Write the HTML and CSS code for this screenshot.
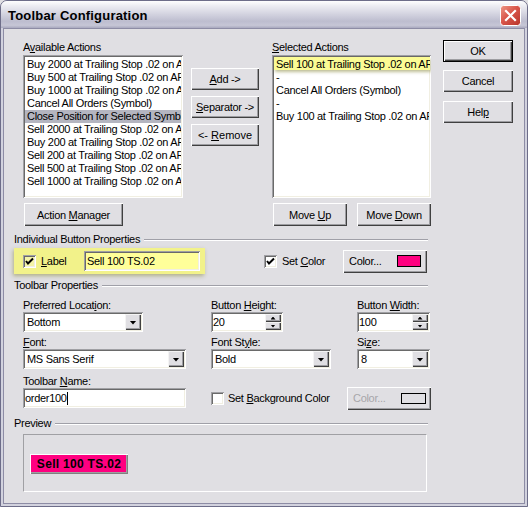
FILE: index.html
```html
<!DOCTYPE html>
<html>
<head>
<meta charset="utf-8">
<title>Toolbar Configuration</title>
<link rel="stylesheet" href="styles.css">
</head>
<body>
<div class="window">
  <div class="titlebar">
    <span class="title">Toolbar Configuration</span>
    <div class="close">
      <svg width="21" height="21" viewBox="0 0 21 21">
        <defs>
          <linearGradient id="cg" x1="0" y1="0" x2="1" y2="1">
            <stop offset="0" stop-color="#ee9a88"/>
            <stop offset="0.45" stop-color="#d9564a"/>
            <stop offset="1" stop-color="#b8332a"/>
          </linearGradient>
        </defs>
        <rect x="0.5" y="0.5" width="20" height="20" rx="3" fill="url(#cg)" stroke="#ffffff"/>
        <path d="M6 6 L15 15 M15 6 L6 15" stroke="#ffffff" stroke-width="2.2" stroke-linecap="square"/>
      </svg>
    </div>
  </div>
  <div class="frame">
    <div class="client">
      <div class="main">
        <div class="top">
          <div class="col-left">
            <div class="lbl">A<u>v</u>ailable Actions</div>
            <div class="listbox">
              <div class="item">Buy 2000 at Trailing Stop .02 on ARCA</div>
              <div class="item">Buy 500 at Trailing Stop .02 on ARCA</div>
              <div class="item">Buy 1000 at Trailing Stop .02 on ARCA</div>
              <div class="item">Cancel All Orders (Symbol)</div>
              <div class="item sel">Close Position for Selected Symbol</div>
              <div class="item">Sell 2000 at Trailing Stop .02 on ARCA</div>
              <div class="item">Buy 200 at Trailing Stop .02 on ARCA</div>
              <div class="item">Sell 200 at Trailing Stop .02 on ARCA</div>
              <div class="item">Sell 500 at Trailing Stop .02 on ARCA</div>
              <div class="item">Sell 1000 at Trailing Stop .02 on ARCA</div>
            </div>
            <div class="btn btn-am"><span>Action <u>M</u>anager</span></div>
          </div>
          <div class="col-mid">
            <div class="btn"><span><u>A</u>dd -&gt;</span></div>
            <div class="btn"><span><u>S</u>eparator -&gt;</span></div>
            <div class="btn btn-rm"><span>&lt;-&nbsp;<u>R</u>emove</span></div>
          </div>
          <div class="col-right">
            <div class="lbl"><u>S</u>elected Actions</div>
            <div class="listbox">
              <div class="item hl">Sell 100 at Trailing Stop .02 on ARCA</div>
              <div class="item">-</div>
              <div class="item">Cancel All Orders (Symbol)</div>
              <div class="item">-</div>
              <div class="item">Buy 100 at Trailing Stop .02 on ARCA</div>
            </div>
            <div class="btnrow">
              <div class="btn"><span>Move <u>U</u>p</span></div>
              <div class="btn"><span>Move <u>D</u>own</span></div>
            </div>
          </div>
        </div>

        <div class="ghd g1"><span>Individual Button Properties</span><i class="rule"></i></div>
        <div class="ind-row">
          <div class="hl-box">
            <span class="chk yel"><svg width="13" height="13" viewBox="0 0 13 13"><path d="M3 6 L5 8.5 L10 3.5" fill="none" stroke="#000" stroke-width="2"/></svg></span>
            <span class="chk-text"><u>L</u>abel</span>
            <div class="field yel">Sell 100 TS.02</div>
          </div>
          <span class="chk setcolor"><svg width="13" height="13" viewBox="0 0 13 13"><path d="M3 6 L5 8.5 L10 3.5" fill="none" stroke="#000" stroke-width="2"/></svg></span>
          <span class="chk-text">Set <u>C</u>olor</span>
          <div class="btn color-btn"><span>Color...</span><span class="swatch pink"></span></div>
        </div>

        <div class="ghd g2"><span>Toolbar Properties</span><i class="rule"></i></div>
        <div class="tb-grid">
          <div class="fld">
            <div class="f-lbl">Preferred Locat<u>i</u>on:</div>
            <div class="combo w120"><span class="val">Bottom</span><span class="dd"></span></div>
          </div>
          <div class="fld">
            <div class="f-lbl">Button <u>H</u>eight:</div>
            <div class="spin w72"><span class="val">20</span><span class="spinbtns"><span class="sb up"></span><span class="sb down"></span></span></div>
          </div>
          <div class="fld">
            <div class="f-lbl">Button <u>W</u>idth:</div>
            <div class="spin w73"><span class="val">100</span><span class="spinbtns"><span class="sb up"></span><span class="sb down"></span></span></div>
          </div>

          <div class="fld">
            <div class="f-lbl"><u>F</u>ont:</div>
            <div class="combo w163"><span class="val">MS Sans Serif</span><span class="dd"></span></div>
          </div>
          <div class="fld">
            <div class="f-lbl">Font St<u>y</u>le:</div>
            <div class="combo w120"><span class="val">Bold</span><span class="dd"></span></div>
          </div>
          <div class="fld">
            <div class="f-lbl">Si<u>z</u>e:</div>
            <div class="combo w73"><span class="val">8</span><span class="dd"></span></div>
          </div>

          <div class="fld r3">
            <div class="f-lbl">Toolbar <u>N</u>ame:</div>
            <div class="field w163 tname">order100<span class="caret"></span></div>
          </div>
          <div class="fld r3 span2">
            <div class="f-lbl"></div>
            <div class="bgrow">
              <span class="bgleft"><span class="chk"></span><span class="chk-text bgtext">Set <u>B</u>ackground Color</span></span>
              <div class="btn color-btn disabled"><span>Color...</span><span class="swatch empty"></span></div>
            </div>
          </div>
        </div>

        <div class="ghd g3"><span>Preview</span><i class="rule"></i></div>
        <div class="preview">
          <div class="pv-btn"><span>Sell 100 TS.02</span></div>
        </div>
      </div>

      <div class="side">
        <div class="btn ok"><span>OK</span></div>
        <div class="btn cancel"><span>Cancel</span></div>
        <div class="btn help"><span>Hel<u>p</u></span></div>
      </div>
    </div>
  </div>
</div>
</body>
</html>
```

FILE: styles.css
```css
* { box-sizing: border-box; }
html, body { margin: 0; padding: 0; }
body {
  width: 528px;
  height: 507px;
  overflow: hidden;
  background: #e0dfe3;
  font-family: "Liberation Sans", Arial, sans-serif;
  font-size: 11px;
  letter-spacing: -0.3px;
  color: #000;
}
u { text-underline-offset: 1px; }

.window {
  width: 528px;
  height: 507px;
  border: 1px solid #6d6d89;
  border-radius: 7px 7px 0 0;
  overflow: hidden;
  display: flex;
  flex-direction: column;
  background: #d2d2de;
}
.titlebar {
  height: 27px;
  flex: none;
  display: flex;
  align-items: flex-start;
  background: linear-gradient(to bottom, #fefefe 0%, #ececf2 18%, #d6d6e2 45%, #bdbdcf 75%, #c6c6d6 90%, #a9a9bf 100%);
}
.title {
  font-weight: bold;
  font-size: 13px;
  letter-spacing: 0.2px;
  padding: 2px 0 0 7px;
  line-height: 25px;
}
.close {
  margin: 4px 6px 0 auto;
  width: 21px;
  height: 21px;
}
.close svg { display: block; }

.frame {
  flex: 1;
  display: flex;
  padding: 0 2px 2px;
}
.client {
  flex: 1;
  display: flex;
  gap: 12px;
  border: 1px solid #8d8ca5;
  background: #e0dfe3;
  padding: 11px 10px 0 10px;
}
.main {
  width: 417px;
  display: flex;
  flex-direction: column;
}
.side {
  width: 70px;
  display: flex;
  flex-direction: column;
}

/* generic controls */
.btn {
  height: 22px;
  display: flex;
  align-items: center;
  justify-content: center;
  white-space: nowrap;
  background: #e0dfe3;
  box-shadow: inset 1px 1px #ffffff, inset -1px -1px #404040, inset -2px -2px #9d9da1;
}
.btn-rm { letter-spacing: 0; }
.listbox, .field, .combo, .spin, .chk {
  box-shadow: inset 1px 1px #a0a0a4, inset -1px -1px #ffffff, inset 2px 2px #6a6a6a, inset -2px -2px #f1efe2;
}

.top {
  display: flex;
  padding-left: 9px;
  height: 187px;
}
.col-left { width: 160px; }
.col-mid {
  width: 68px;
  margin-left: 8px;
  padding-top: 28px;
  display: flex;
  flex-direction: column;
  gap: 6px;
}
.col-right { width: 159px; margin-left: 13px; }
.lbl { height: 15px; line-height: 15px; }
.listbox {
  height: 143px;
  background: #ffffff;
  padding: 3px 2px 2px;
  overflow: hidden;
}
.item {
  height: 13px;
  line-height: 13px;
  padding-left: 2px;
  white-space: nowrap;
  overflow: hidden;
}
.item.sel { background: #b4b5c0; }
.item.hl {
  background: #fbfb94;
  box-shadow: 1px 2px 3px rgba(110, 110, 20, 0.45);
  margin: -1px -1px 1px 0;
  height: 13px;
  padding-top: 1px;
}
.btn-am { width: 99px; height: 23px; margin: 5px 0 0 1px; }
.btnrow { display: flex; gap: 10px; margin: 5px 0 0 1px; }
.btnrow .btn { width: 74px; height: 23px; }

.side .btn { width: 70px; height: 22px; }
.side .ok {
  box-shadow: inset 0 0 0 1px #000, inset 2px 2px #ffffff, inset -2px -2px #404040, inset -3px -3px #9d9da1;
}
.side .cancel { margin-top: 8px; }
.side .help { margin-top: 9px; }

/* group headers */
.ghd {
  display: flex;
  align-items: center;
  height: 13px;
  line-height: 13px;
  margin-right: 3px;
  white-space: nowrap;
}
.ghd .rule {
  flex: 1;
  height: 2px;
  border-top: 1px solid #a0a0a8;
  border-bottom: 1px solid #ffffff;
  margin-left: 4px;
}
.g1 { margin-top: 6px; }
.g2 { margin-top: 5px; }
.g3 { margin-top: 9px; }

/* individual button row */
.ind-row {
  display: flex;
  align-items: center;
  height: 26px;
  margin-top: 2px;
  padding-right: 4px;
}
.hl-box {
  width: 191px;
  height: 26px;
  display: flex;
  align-items: center;
  padding: 0 5px 0 9px;
  background: #f2f28a;
  box-shadow: -1px 2px 4px rgba(120, 120, 30, 0.45);
}
.chk {
  width: 13px;
  height: 13px;
  flex: none;
  background: #ffffff;
  display: block;
}
.chk svg { display: block; }
.chk.yel { background: #f4f4a8; }
.chk-text { margin-left: 5px; white-space: nowrap; }
.field {
  height: 20px;
  line-height: 20px;
  background: #ffffff;
  padding: 0 3px;
  white-space: nowrap;
  overflow: hidden;
}
.field.yel { background: #ffff99; width: 116px; margin-left: auto; }
.setcolor { margin-left: 59px; }
.color-btn {
  width: 84px;
  height: 23px;
  margin-left: auto;
  justify-content: flex-start;
  padding-left: 6px;
}
.swatch {
  width: 24px;
  height: 12px;
  border: 1px solid #000;
  margin-left: auto;
  margin-right: 6px;
}
.swatch.pink { background: #ff0080; }
.swatch.empty { width: 25px; height: 11px; margin-right: 5px; }
.disabled { color: #a7a6aa; }

/* toolbar properties grid */
.tb-grid {
  display: grid;
  grid-template-columns: 188px 146px 74px;
  row-gap: 4px;
  margin-top: 7px;
  padding-left: 9px;
}
.f-lbl { height: 13px; line-height: 13px; white-space: nowrap; }
.r3 { margin-top: 2px; }
.span2 { grid-column: 2 / 4; }
.combo {
  height: 20px;
  display: flex;
  background: #ffffff;
  padding: 2px;
}
.combo .val {
  flex: 1;
  line-height: 16px;
  padding-left: 2px;
  white-space: nowrap;
  overflow: hidden;
}
.dd {
  width: 16px;
  height: 16px;
  flex: none;
  display: flex;
  align-items: center;
  justify-content: center;
  background: #e0dfe3;
  box-shadow: inset 1px 1px #f4f4f4, inset -1px -1px #404040, inset -2px -2px #9d9da1;
}
.dd::after {
  content: "";
  width: 7px;
  height: 4px;
  background: #000;
  clip-path: polygon(0 0, 100% 0, 50% 100%);
  margin-top: 1px;
}
.w120 { width: 120px; }
.w163 { width: 163px; }
.w72 { width: 72px; }
.w73 { width: 73px; }
.spin {
  height: 20px;
  display: flex;
  background: #ffffff;
  padding: 2px;
}
.spin .val { flex: 1; line-height: 16px; padding-left: 0; }
.spinbtns {
  width: 16px;
  display: flex;
  flex-direction: column;
}
.sb {
  flex: 1;
  display: flex;
  align-items: center;
  justify-content: center;
  background: #e0dfe3;
  box-shadow: inset 1px 1px #f4f4f4, inset -1px -1px #404040, inset -2px -2px #9d9da1;
}
.sb::after {
  content: "";
  width: 5px;
  height: 3px;
  background: #000;
}
.sb.up::after { clip-path: polygon(50% 0, 100% 100%, 0 100%); }
.sb.down::after { clip-path: polygon(0 0, 100% 0, 50% 100%); }
.tname { padding-left: 2px; }
.caret {
  display: inline-block;
  width: 1px;
  height: 13px;
  background: #000;
  vertical-align: middle;
  margin-top: -2px;
}
.bgrow {
  height: 20px;
  display: flex;
  align-items: center;
  justify-content: space-between;
}
.bgleft { display: flex; align-items: center; }
.bgtext { margin-left: 4px; }

/* preview */
.preview {
  width: 404px;
  height: 58px;
  margin: 4px 0 0 9px;
  border-top: 1px solid #a0a0a4;
  border-left: 1px solid #a0a0a4;
  border-bottom: 1px solid #ffffff;
  border-right: 1px solid #ffffff;
  padding: 19px 0 0 6px;
}
.pv-btn {
  width: 98px;
  height: 20px;
  display: flex;
  align-items: center;
  justify-content: center;
  background: #ff0080;
  font-weight: bold;
  font-size: 12px;
  letter-spacing: 0.3px;
  box-shadow: inset 1px 1px #ffffff, inset -1px -1px #808080, inset -2px -2px #a0a0a0;
}
```
